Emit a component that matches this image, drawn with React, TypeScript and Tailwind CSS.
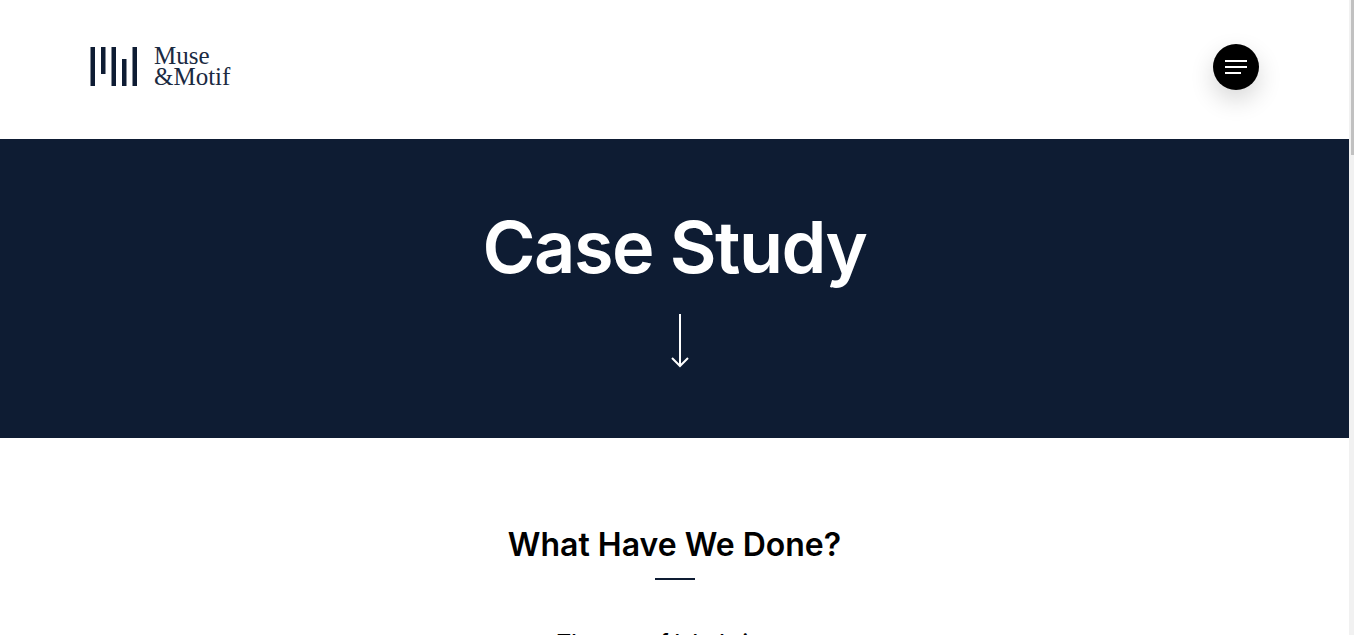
function Logo() {
  return (
    <a className="flex items-center gap-[16px]">
      <svg width="48" height="40" viewBox="0 0 48 40" className="block">
        <g fill="#0e1c33">
          <rect x="0.5" y="0" width="4.5" height="39" />
          <rect x="11" y="0" width="4.5" height="27" />
          <rect x="21.5" y="0" width="4.5" height="39" />
          <rect x="32" y="12" width="4.5" height="27" />
          <rect x="42.5" y="0" width="4.5" height="39" />
        </g>
      </svg>
      <div className="pb-[2px] font-['Liberation_Serif',serif] text-[25px] leading-[21px] text-[#1b2a42]">
        <div>Muse</div>
        <div>&amp;Motif</div>
      </div>
    </a>
  );
}

function App() {
  return (
    <div className="flex h-[635px] overflow-hidden bg-white font-['Inter',sans-serif]">
      <main className="flex-1 min-w-0">
        <header className="flex h-[139px] items-center justify-between px-[90px] pb-[5px]">
          <Logo />
          <button className="flex h-[46px] w-[46px] flex-col items-center justify-center gap-[4px] rounded-full bg-black shadow-[0_10px_25px_rgba(0,0,0,0.16)]">
            <span className="h-[2px] w-[22px] bg-white" />
            <span className="h-[2px] w-[22px] bg-white" />
            <span className="h-[2px] w-[16px] -translate-x-[3px] bg-white" />
          </button>
        </header>

        <section className="flex h-[299px] flex-col items-center bg-[#0e1c33] pt-[68px]">
          <h1 className="text-[72px] font-semibold leading-[80px] tracking-[-1.5px] text-white">Case Study</h1>
          <svg width="20" height="56" viewBox="0 0 20 56" className="mt-[26px] ml-[10px]" fill="none" stroke="#fff" strokeWidth="2">
            <path d="M10 1V53" />
            <path d="M2 45L10 53L18 45" />
          </svg>
        </section>

        <section className="flex flex-col items-center pt-[86px]">
          <h2 className="text-[32px] font-semibold leading-[42px] text-black">What Have We Done?</h2>
          <div className="mt-[12px] h-[2px] w-[40px] bg-[#0e1c33]" />
          <p className="mt-[48px] text-[22px] font-medium leading-[28px] text-black">The use of labels is on</p>
        </section>
      </main>
      <div className="w-[5px] shrink-0 bg-[#f1f1f1]">
        <div className="ml-[2px] h-[155px] w-[3px] bg-[#c1c1c1]" />
      </div>
    </div>
  );
}

export default App;
